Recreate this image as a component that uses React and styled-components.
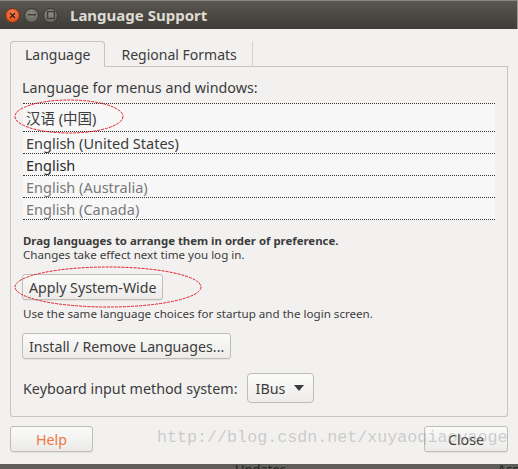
import React from "react";
import styled, { createGlobalStyle } from "styled-components";

const font = `"Noto Sans", "Noto Sans CJK SC", sans-serif`;

const GlobalStyle = createGlobalStyle`
  body {
    margin: 0;
    background: #3c3b37;
    font-family: ${font};
  }
`;

const Window = styled.div`
  position: relative;
  width: 518px;
  height: 469px;
  overflow: hidden;
  display: flex;
  flex-direction: column;
  background: #f2f1f0;
`;

const TitleBar = styled.div`
  height: 29px;
  flex: none;
  display: flex;
  align-items: center;
  padding-left: 5px;
  background: linear-gradient(#5a5650, #3d3c37);
  border-top: 1px solid #8a8780;
  border-right: 1px solid #9c9a94;
  box-sizing: border-box;
`;

const WinButton = styled.div`
  width: 15px;
  height: 15px;
  border-radius: 50%;
  margin-right: 4px;
  display: flex;
  align-items: center;
  justify-content: center;
  box-sizing: border-box;
  background: ${(p) =>
    p.close
      ? "radial-gradient(circle at 50% 35%, #f58a5e, #e0521f 70%)"
      : "radial-gradient(circle at 50% 35%, #8f8c85, #6a6862 70%)"};
  border: 1px solid ${(p) => (p.close ? "#7c2f14" : "#3a3935")};
`;

const Title = styled.div`
  margin-left: 8px;
  color: #dfdbd2;
  font-weight: bold;
  font-size: 15px;
`;

const Body = styled.div`
  flex: 1;
  display: flex;
  flex-direction: column;
  padding: 12px 10px 0 10px;
`;

const TabRow = styled.div`
  display: flex;
  height: 26px;
  align-items: flex-end;
`;

const Tab = styled.div`
  height: 26px;
  box-sizing: border-box;
  padding: 0 ${(p) => (p.active ? 14 : 15)}px;
  display: flex;
  align-items: center;
  font-size: 14px;
  color: #3c3c3c;
  border: 1px solid ${(p) => (p.active ? "#c6c4bf" : "transparent")};
  border-bottom: ${(p) => (p.active ? "none" : "1px solid #c6c4bf")};
  border-right: ${(p) => (p.active ? "1px solid #c6c4bf" : "1px solid #d2d0cc")};
  border-radius: ${(p) => (p.active ? "4px 4px 0 0" : "0")};
`;

const TabFill = styled.div`
  flex: 1;
  height: 26px;
  box-sizing: border-box;
  border-bottom: 1px solid #c6c4bf;
`;

const Panel = styled.div`
  height: 350px;
  box-sizing: border-box;
  border: 1px solid #c6c4bf;
  border-top: none;
  border-radius: 0 0 3px 3px;
  padding: 12px 12px 0 11px;
  display: flex;
  flex-direction: column;
`;

const Label = styled.div`
  font-size: 14.3px;
  color: #3c3c3c;
  line-height: 18px;
  margin-bottom: 6px;
`;

const LangList = styled.div`
  background: #f7f7f7;
  border-bottom: 1px dotted #333;
  margin-left: 1px;
`;

const Row = styled.div`
  height: ${(p) => (p.tall ? 27 : 21)}px;
  border-top: 1px dotted #333;
  display: flex;
  align-items: center;
  padding-left: 3px;
  font-size: 14.5px;
  color: ${(p) => (p.dim ? "#7a7a7a" : p.strong ? "#2a2a2a" : "#3c3c3c")};
`;

const Hint = styled.div`
  font-size: ${(p) => (p.bold ? 11.4 : 11.6)}px;
  line-height: 14px;
  color: #3c3c3c;
  font-weight: ${(p) => (p.bold ? "bold" : "normal")};
  margin-left: 1px;
  margin-top: ${(p) => p.gap || 0}px;
`;

const Button = styled.button`
  font-family: ${font};
  height: 26px;
  box-sizing: border-box;
  padding: 0 6px;
  width: ${(p) => (p.w ? p.w + "px" : "auto")};
  font-size: 14.2px;
  color: ${(p) => (p.accent ? "#f07746" : "#3c3c3c")};
  background: linear-gradient(#fbfbfa, #ecebe9);
  border: 1px solid #bfbdb8;
  border-radius: 3px;
  box-shadow: 0 1px 0 rgba(0, 0, 0, 0.06);
  align-self: flex-start;
  text-align: ${(p) => (p.center ? "center" : "left")};
  margin-top: ${(p) => p.gap || 0}px;
`;

const KeyRow = styled.div`
  display: flex;
  align-items: center;
  margin-top: 14px;
  margin-left: 1px;
  font-size: 14.3px;
  color: #3c3c3c;
`;

const Combo = styled.div`
  margin-left: 9px;
  width: 67px;
  height: 30px;
  box-sizing: border-box;
  border: 1px solid #bfbdb8;
  border-radius: 4px;
  background: linear-gradient(#fbfbfa, #eeedeb);
  display: flex;
  align-items: center;
  justify-content: space-between;
  padding: 0 9px 0 8px;
  font-size: 14.3px;
`;

const Footer = styled.div`
  display: flex;
  justify-content: space-between;
  margin-top: 9px;
`;

const BackStrip = styled.div`
  margin-top: auto;
  height: 5px;
  background: #5e5d5a;
  display: flex;
  font-size: 13px;
  line-height: 10px;
  color: #222;
  overflow: hidden;
`;

const StripText = styled.span`
  margin-left: ${(p) => p.left};
  margin-right: ${(p) => p.right || 0};
`;

const Watermark = styled.div`
  position: absolute;
  left: 157px;
  top: 428px;
  font-family: "Liberation Mono", monospace;
  font-size: 16.7px;
  color: rgba(165, 165, 165, 0.5);
  pointer-events: none;
  white-space: nowrap;
`;

const Overlay = styled.svg`
  position: absolute;
  left: 0;
  top: 0;
  pointer-events: none;
`;

export default function App() {
  return (
    <>
      <GlobalStyle />
      <Window>
        <TitleBar>
          <WinButton close>
            <svg width="7" height="7" viewBox="0 0 7 7">
              <path d="M1 1L6 6M6 1L1 6" stroke="#3a1a0c" strokeWidth="1.3" />
            </svg>
          </WinButton>
          <WinButton>
            <svg width="8" height="2" viewBox="0 0 8 2">
              <rect width="8" height="1.4" fill="#3c3b37" />
            </svg>
          </WinButton>
          <WinButton>
            <svg width="8" height="8" viewBox="0 0 8 8">
              <rect x="0.6" y="0.6" width="6.8" height="6.8" fill="none" stroke="#3c3b37" strokeWidth="1.2" />
            </svg>
          </WinButton>
          <Title>Language Support</Title>
        </TitleBar>
        <Body>
          <TabRow>
            <Tab active>Language</Tab>
            <Tab>Regional Formats</Tab>
            <TabFill />
          </TabRow>
          <Panel>
            <Label>Language for menus and windows:</Label>
            <LangList>
              <Row tall>汉语 (中国)</Row>
              <Row>English (United States)</Row>
              <Row strong>English</Row>
              <Row dim>English (Australia)</Row>
              <Row dim>English (Canada)</Row>
            </LangList>
            <Hint bold gap={14}>Drag languages to arrange them in order of preference.</Hint>
            <Hint>Changes take effect next time you log in.</Hint>
            <Button gap={12}>Apply System-Wide</Button>
            <Hint gap={7}>Use the same language choices for startup and the login screen.</Hint>
            <Button gap={12}>Install / Remove Languages...</Button>
            <KeyRow>
              Keyboard input method system:
              <Combo>
                IBus
                <svg width="10" height="6" viewBox="0 0 10 6">
                  <path d="M0 0H10L5 6Z" fill="#3c3c3c" />
                </svg>
              </Combo>
            </KeyRow>
          </Panel>
          <Footer>
            <Button accent center w={83}>Help</Button>
            <Button center w={84}>Close</Button>
          </Footer>
        </Body>
        <BackStrip>
          <StripText left="235px">Updates</StripText>
          <StripText left="auto" right="-20px">Access</StripText>
        </BackStrip>
        <Watermark>http://blog.csdn.net/xuyaoqiaoyaoge</Watermark>
        <Overlay width="518" height="469">
          <ellipse cx="69" cy="116.5" rx="54" ry="16.5" fill="none" stroke="#e0202a" strokeWidth="1" strokeDasharray="3 1" />
          <ellipse cx="108" cy="287" rx="93" ry="20" fill="none" stroke="#e0202a" strokeWidth="1" strokeDasharray="3 1" />
        </Overlay>
      </Window>
    </>
  );
}
